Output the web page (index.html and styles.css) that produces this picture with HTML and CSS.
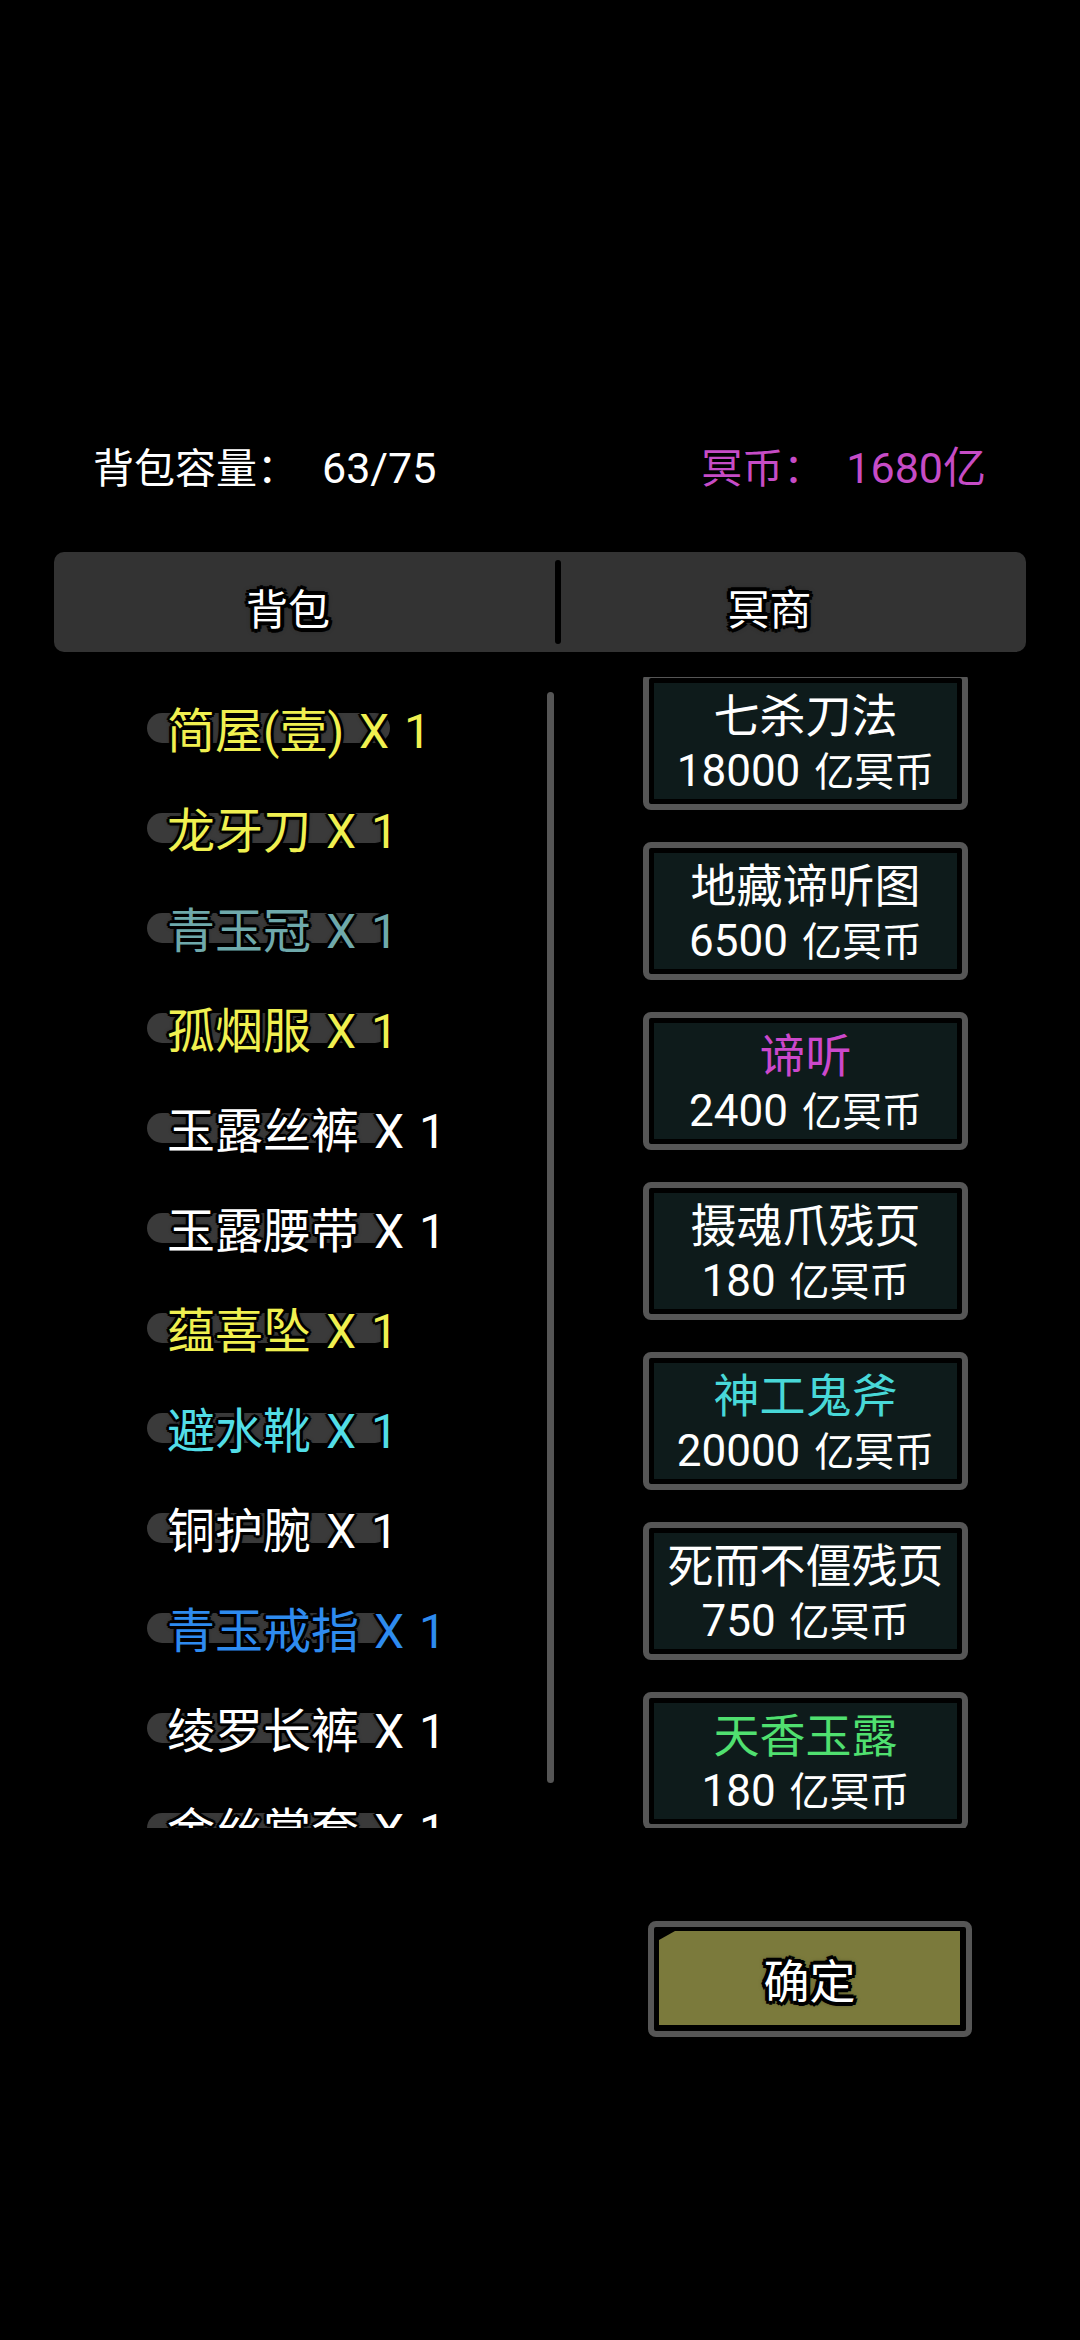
FILE: index.html
```html
<!DOCTYPE html>
<html lang="zh-CN">
<head>
<meta charset="utf-8">
<title>冥商</title>
<link rel="stylesheet" href="styles.css">
</head>
<body>
<div class="page">
  <div class="header">
    <div class="cap"><span>背包容量：</span><span class="val">63/75</span></div>
    <div class="coin"><span>冥币：</span><span class="val">1680亿</span></div>
  </div>

  <div class="tabs">
    <div class="tab tab-left"><span class="outline-lg">背包</span></div>
    <div class="divider"></div>
    <div class="tab tab-right"><span class="outline-lg">冥商</span></div>
  </div>

  <div class="content">
    <div class="bag">
      <div class="item c-yellow"><span>简屋(壹) X 1</span></div>
      <div class="item c-yellow"><span>龙牙刀 X 1</span></div>
      <div class="item c-jade"><span>青玉冠 X 1</span></div>
      <div class="item c-yellow"><span>孤烟服 X 1</span></div>
      <div class="item c-white"><span>玉露丝裤 X 1</span></div>
      <div class="item c-white"><span>玉露腰带 X 1</span></div>
      <div class="item c-yellow"><span>蕴喜坠 X 1</span></div>
      <div class="item c-cyan"><span>避水靴 X 1</span></div>
      <div class="item c-white"><span>铜护腕 X 1</span></div>
      <div class="item c-blue"><span>青玉戒指 X 1</span></div>
      <div class="item c-white"><span>绫罗长裤 X 1</span></div>
      <div class="item c-white"><span>金丝掌套 X 1</span></div>
    </div>
    <div class="scrollbar"></div>
    <div class="shop-view">
      <div class="shop">
        <div class="card"><div class="title">七杀刀法</div><div class="price"><span class="num">18000</span> 亿冥币</div></div>
        <div class="card"><div class="title">地藏谛听图</div><div class="price"><span class="num">6500</span> 亿冥币</div></div>
        <div class="card"><div class="title t-purple">谛听</div><div class="price"><span class="num">2400</span> 亿冥币</div></div>
        <div class="card"><div class="title">摄魂爪残页</div><div class="price"><span class="num">180</span> 亿冥币</div></div>
        <div class="card"><div class="title t-cyan">神工鬼斧</div><div class="price"><span class="num">20000</span> 亿冥币</div></div>
        <div class="card"><div class="title">死而不僵残页</div><div class="price"><span class="num">750</span> 亿冥币</div></div>
        <div class="card"><div class="title t-green">天香玉露</div><div class="price"><span class="num">180</span> 亿冥币</div></div>
      </div>
    </div>
  </div>

  <div class="actions">
    <div class="confirm">
      <div class="confirm-fill"><span class="outline-lg">确定</span></div>
    </div>
  </div>
</div>
</body>
</html>
```

FILE: styles.css
```css
html, body {
  margin: 0;
  padding: 0;
  background: #000;
}

body {
  width: 1080px;
  height: 2340px;
  overflow: hidden;
  font-family: "Noto Sans CJK SC", "Noto Sans", sans-serif;
  color: #fff;
}

.page {
  padding-top: 435px;
}

/* header */
.header {
  display: flex;
  justify-content: space-between;
  height: 60px;
  line-height: 60px;
  font-size: 41px;
  padding: 0 94px 0 93px;
}

.cap .val {
  margin-left: 24px;
  font-family: Roboto, "Noto Sans CJK SC", sans-serif;
  font-size: 43px;
}

.coin .val {
  margin-left: 22px;
  font-family: Roboto, "Noto Sans CJK SC", sans-serif;
  font-size: 43px;
}

.coin {
  color: #c64cc6;
}

/* tabs */
.tabs {
  margin: 57px 54px 0 54px;
  height: 100px;
  background: #333333;
  border-radius: 10px;
  display: flex;
  align-items: center;
}

.tab {
  height: 100px;
  display: flex;
  align-items: center;
  justify-content: center;
  font-size: 42px;
  padding-top: 8px;
  box-sizing: border-box;
}

.tab-left {
  width: 501px;
  padding-right: 33px;
}

.tab-right {
  width: 465px;
  padding-right: 48px;
}

.divider {
  width: 6px;
  height: 84px;
  background: #000;
  border-radius: 3px;
}

.outline-lg {
  color: #fff;
  text-shadow:
    -3px -3px 0 #000, 3px -3px 0 #000, -3px 3px 0 #000, 3px 3px 0 #000,
    -4px 0 0 #000, 4px 0 0 #000, 0 -4px 0 #000, 0 4px 0 #000,
    0 0 6px #000;
}

/* content */
.content {
  display: flex;
  margin-top: 25px;
  height: 1151px;
}

.bag {
  width: 400px;
  margin-left: 147px;
  height: 1151px;
  overflow: hidden;
}

.item {
  position: relative;
  height: 100px;
  display: flex;
  align-items: center;
  font-family: Roboto, "Noto Sans CJK SC", sans-serif;
  font-size: 48px;
  white-space: nowrap;
  word-spacing: 3px;
}

.item::before {
  content: "";
  position: absolute;
  left: 0;
  top: 36px;
  width: 243px;
  height: 30px;
  border-radius: 15px;
  background: #3a3a3a;
}

.item span {
  position: relative;
  padding-left: 20px;
  text-shadow:
    -2px -2px 0 #000, 2px -2px 0 #000, -2px 2px 0 #000, 2px 2px 0 #000,
    -3px 0 0 #000, 3px 0 0 #000, 0 -3px 0 #000, 0 3px 0 #000,
    0 0 5px #000;
}

.c-yellow { color: #f0f050; }
.c-jade { color: #6fa9ab; }
.c-white { color: #ffffff; }
.c-cyan { color: #52dde6; }
.c-blue { color: #2e8bef; }

.scrollbar {
  width: 7px;
  height: 1091px;
  margin-top: 15px;
  background: #555;
  border-radius: 4px;
}

.shop-view {
  width: 325px;
  margin-left: 89px;
  height: 1151px;
  overflow: hidden;
}

.shop {
  margin-top: -5px;
  display: flex;
  flex-direction: column;
  gap: 32px;
}

.card {
  box-sizing: border-box;
  height: 138px;
  border: 6px solid #565656;
  border-radius: 8px;
  background: #0e1b1b;
  box-shadow: inset 0 0 0 5px #000;
  padding-top: 5px;
  text-align: center;
  overflow: hidden;
}

.title {
  font-size: 46px;
  line-height: 58px;
  height: 58px;
  white-space: nowrap;
}

.price {
  font-family: Roboto, "Noto Sans CJK SC", sans-serif;
  font-size: 40px;
  line-height: 60px;
  height: 60px;
  white-space: nowrap;
  word-spacing: 4px;
}

.price .num {
  font-size: 44px;
}

.t-purple { color: #cc48cc; }
.t-cyan { color: #48d8d8; }
.t-green { color: #50e070; }

/* confirm */
.actions {
  margin-top: 93px;
  padding-left: 648px;
}

.confirm {
  box-sizing: border-box;
  width: 324px;
  height: 116px;
  border: 6px solid #565656;
  border-radius: 8px;
  background: #000;
  padding: 4px 6px 6px 5px;
}

.confirm-fill {
  height: 100%;
  background: #7b7a3c;
  clip-path: polygon(16px 0, 100% 0, 100% 100%, 0 100%, 0 9px);
  display: flex;
  align-items: center;
  justify-content: center;
  font-size: 46px;
}
```
